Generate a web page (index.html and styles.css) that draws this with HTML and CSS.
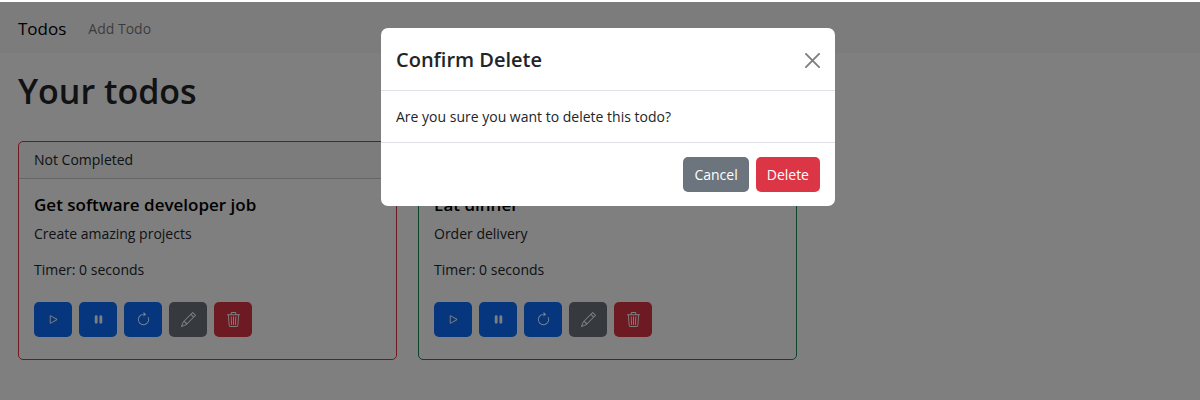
FILE: index.html
```
<!DOCTYPE html>
<html lang="en">
<head>
    <meta charset="UTF-8">
    <meta name="viewport" content="width=device-width, initial-scale=1.0">
    <title>Todos</title>
    <link rel="stylesheet" href="styles.css">
</head>
<body>
    <!-- Icons shared by the todo cards -->
    <svg class="icon-defs" aria-hidden="true">
        <symbol id="play" viewBox="0 0 16 16">
            <path d="M10.804 8 5 4.633v6.734L10.804 8zm.792-.696a.802.802 0 0 1 0 1.392l-6.363 3.692C4.713 12.69 4 12.345 4 11.692V4.308c0-.653.713-.998 1.233-.696l6.363 3.692z"/>
        </symbol>
        <symbol id="pause" viewBox="0 0 16 16">
            <path d="M5.5 3.5A1.5 1.5 0 0 1 7 5v6a1.5 1.5 0 0 1-3 0V5a1.5 1.5 0 0 1 1.5-1.5zm5 0A1.5 1.5 0 0 1 12 5v6a1.5 1.5 0 0 1-3 0V5a1.5 1.5 0 0 1 1.5-1.5z"/>
        </symbol>
        <symbol id="reset" viewBox="0 0 16 16">
            <path fill-rule="evenodd" d="M8 3a5 5 0 1 0 4.546 2.914.5.5 0 0 1 .908-.417A6 6 0 1 1 8 2v1z"/>
            <path d="M8 4.466V.534a.25.25 0 0 1 .41-.192l2.36 1.966c.12.1.12.284 0 .384L8.41 4.658A.25.25 0 0 1 8 4.466z"/>
        </symbol>
        <symbol id="pencil" viewBox="0 0 16 16">
            <path d="M12.146.146a.5.5 0 0 1 .708 0l3 3a.5.5 0 0 1 0 .708l-10 10a.5.5 0 0 1-.168.11l-5 2a.5.5 0 0 1-.65-.65l2-5a.5.5 0 0 1 .11-.168l10-10zM11.207 2.5 13.5 4.793 14.793 3.5 12.5 1.207 11.207 2.5zm1.586 3L10.5 3.207 4 9.707V10h.5a.5.5 0 0 1 .5.5v.5h.5a.5.5 0 0 1 .5.5v.5h.293l6.5-6.5zm-9.761 5.175-.106.106-1.528 3.821 3.821-1.528.106-.106A.5.5 0 0 1 5 12.5V12h-.5a.5.5 0 0 1-.5-.5V11h-.5a.5.5 0 0 1-.468-.325z"/>
        </symbol>
        <symbol id="trash" viewBox="0 0 16 16">
            <path d="M6.5 1h3a.5.5 0 0 1 .5.5v1H6v-1a.5.5 0 0 1 .5-.5ZM11 2.5v-1A1.5 1.5 0 0 0 9.5 0h-3A1.5 1.5 0 0 0 5 1.5v1H2.506a.58.58 0 0 0-.01 0H1.5a.5.5 0 0 0 0 1h.538l.853 10.66A2 2 0 0 0 4.885 16h6.23a2 2 0 0 0 1.994-1.84l.853-10.66h.538a.5.5 0 0 0 0-1h-.995a.59.59 0 0 0-.01 0H11Zm1.958 1-.846 10.58a1 1 0 0 1-.997.92h-6.23a1 1 0 0 1-.997-.92L3.042 3.5h9.916Zm-7.487 1a.5.5 0 0 1 .528.47l.5 8.5a.5.5 0 0 1-.998.06L5 5.03a.5.5 0 0 1 .47-.53Zm5.058 0a.5.5 0 0 1 .47.53l-.5 8.5a.5.5 0 1 1-.998-.06l.5-8.5a.5.5 0 0 1 .528-.47ZM8 4.5a.5.5 0 0 1 .5.5v8.5a.5.5 0 0 1-1 0V5a.5.5 0 0 1 .5-.5Z"/>
        </symbol>
    </svg>

    <nav class="navbar">
        <a class="navbar-brand" href="#">Todos</a>
        <a class="nav-link" href="#">Add Todo</a>
    </nav>

    <main class="container">
        <h1>Your todos</h1>

        <div class="todos">
            <div class="card not-completed">
                <div class="card-header">Not Completed</div>
                <div class="card-body">
                    <h2 class="card-title">Get software developer job</h2>
                    <p class="card-text">Create amazing projects</p>
                    <p class="card-text">Timer: 0 seconds</p>
                    <div class="actions">
                        <button class="btn btn-primary" aria-label="Start"><svg class="icon"><use href="#play"/></svg></button>
                        <button class="btn btn-primary" aria-label="Pause"><svg class="icon"><use href="#pause"/></svg></button>
                        <button class="btn btn-primary" aria-label="Reset"><svg class="icon"><use href="#reset"/></svg></button>
                        <button class="btn btn-secondary" aria-label="Edit"><svg class="icon"><use href="#pencil"/></svg></button>
                        <button class="btn btn-danger" aria-label="Delete"><svg class="icon"><use href="#trash"/></svg></button>
                    </div>
                </div>
            </div>

            <div class="card completed">
                <div class="card-header">Completed</div>
                <div class="card-body">
                    <h2 class="card-title">Eat dinner</h2>
                    <p class="card-text">Order delivery</p>
                    <p class="card-text">Timer: 0 seconds</p>
                    <div class="actions">
                        <button class="btn btn-primary" aria-label="Start"><svg class="icon"><use href="#play"/></svg></button>
                        <button class="btn btn-primary" aria-label="Pause"><svg class="icon"><use href="#pause"/></svg></button>
                        <button class="btn btn-primary" aria-label="Reset"><svg class="icon"><use href="#reset"/></svg></button>
                        <button class="btn btn-secondary" aria-label="Edit"><svg class="icon"><use href="#pencil"/></svg></button>
                        <button class="btn btn-danger" aria-label="Delete"><svg class="icon"><use href="#trash"/></svg></button>
                    </div>
                </div>
            </div>
        </div>
    </main>

    <div class="backdrop">
        <div class="modal" role="dialog" aria-modal="true" aria-labelledby="modal-title">
            <div class="modal-header">
                <h2 class="modal-title" id="modal-title">Confirm Delete</h2>
                <button class="btn-close" aria-label="Close">
                    <svg viewBox="0 0 16 16"><path d="M1 1 15 15M15 1 1 15"/></svg>
                </button>
            </div>
            <div class="modal-body">Are you sure you want to delete this todo?</div>
            <div class="modal-footer">
                <button class="btn btn-secondary">Cancel</button>
                <button class="btn btn-danger">Delete</button>
            </div>
        </div>
    </div>
</body>
</html>
```
FILE: styles.css
```
* {
    margin: 0;
    padding: 0;
    box-sizing: border-box;
}

body {
    font-family: "Segoe UI", "Open Sans", "Noto Sans", sans-serif;
    font-size: 14px;
    line-height: 22px;
    color: #212529;
    background: #fff;
    padding-top: 2px;
}

h1,
h2 {
    font-weight: 600;
}

.icon-defs {
    display: none;
}

/* Navbar */
.navbar {
    display: flex;
    align-items: center;
    gap: 22px;
    padding: 12px 18px 10px;
    background: #f8f9fa;
}

.navbar a {
    text-decoration: none;
}

.navbar-brand {
    font-size: 17px;
    line-height: 29px;
    color: #000;
}

.nav-link {
    color: rgba(0, 0, 0, 0.55);
}

/* Todo list */
.container {
    padding: 16px 3px 16px 18px;
}

h1 {
    font-size: 34px;
    line-height: 44px;
    margin-bottom: 28px;
}

.todos {
    display: grid;
    grid-template-columns: repeat(3, 1fr);
    gap: 21px;
}

.card {
    border: 1px solid #dc3545;
    border-radius: 5px;
}

.card.completed {
    border-color: #198754;
}

.card-header {
    padding: 7px 15px;
    background: rgba(33, 37, 41, 0.03);
    border-bottom: 1px solid rgba(0, 0, 0, 0.175);
}

.card-body {
    padding: 15px 15px 22px;
}

.card-title {
    font-size: 17px;
    line-height: 22px;
    margin-bottom: 7px;
    color: #000;
}

.card-text {
    margin-bottom: 14px;
}

.actions {
    display: flex;
    gap: 7px;
    padding-top: 7px;
}

/* Buttons */
.btn {
    display: inline-flex;
    align-items: center;
    justify-content: center;
    height: 35px;
    padding: 0 11px;
    border: none;
    border-radius: 5px;
    font: inherit;
    color: #fff;
    cursor: pointer;
}

.btn-primary {
    background: #0d6efd;
}

.btn-secondary {
    background: #6c757d;
}

.btn-danger {
    background: #dc3545;
}

.actions .btn {
    width: 38px;
}

.icon {
    flex: none;
    width: 15px;
    height: 15px;
    fill: currentColor;
}

/* Modal */
.backdrop {
    position: fixed;
    inset: 2px 0 0;
    display: flex;
    align-items: flex-start;
    justify-content: center;
    padding: 26px 0 0 16px;
    background: rgba(0, 0, 0, 0.5);
}

.modal {
    width: 100%;
    max-width: 454px;
    background: #fff;
    border-radius: 7px;
}

.modal-header {
    display: flex;
    align-items: center;
    justify-content: space-between;
    padding: 15px 15px 13px;
    border-bottom: 1px solid #dee2e6;
}

.modal-title {
    font-size: 20px;
    line-height: 34px;
}

.btn-close {
    display: flex;
    border: none;
    background: none;
    opacity: 0.5;
    cursor: pointer;
}

.btn-close svg {
    width: 15px;
    height: 15px;
    stroke: #000;
    stroke-width: 2;
    stroke-linecap: round;
}

.modal-body {
    padding: 15px 15px 14px;
}

.modal-footer {
    display: flex;
    justify-content: flex-end;
    gap: 7px;
    padding: 14px 15px;
    border-top: 1px solid #dee2e6;
}
```
